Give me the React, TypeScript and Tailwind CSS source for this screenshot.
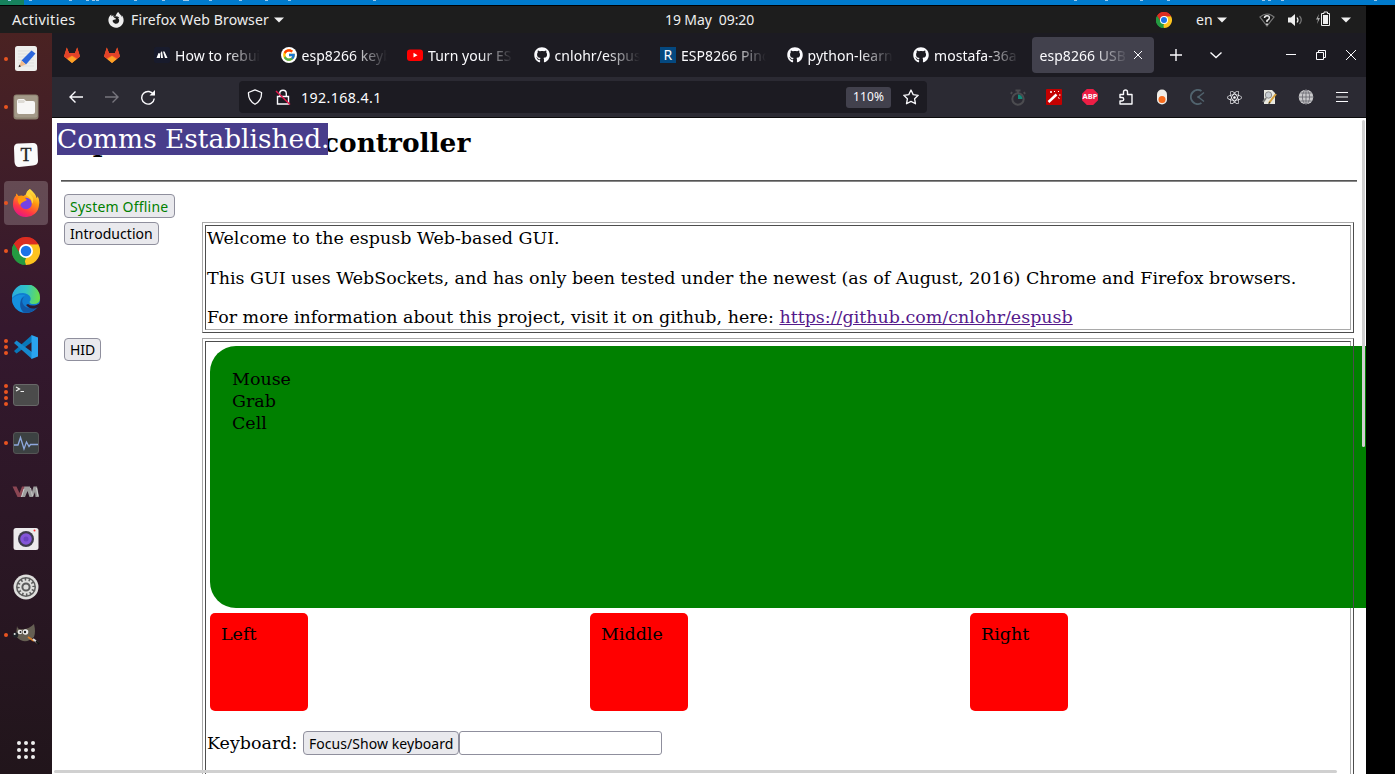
import React from "react";
import { FaGithub, FaFirefoxBrowser, FaReact } from "react-icons/fa";
import { FcGoogle } from "react-icons/fc";

const UI = "font-['Noto_Sans','Open_Sans',sans-serif]";

function Chrome({ size }: { size: number }) {
  return (
    <svg width={size} height={size} viewBox="0 0 48 48">
      <path d="M24 24 3.2 12A24 24 0 0 1 44.8 12Z" fill="#db2d21" />
      <path d="M24 24 44.8 12A24 24 0 0 1 24 48Z" fill="#fcc31e" />
      <path d="M24 24 24 48A24 24 0 0 1 3.2 12Z" fill="#249a41" />
      <path d="M24 12.5H44.8V13L34 30Z" fill="#fcc31e" />
      <path d="M33.5 29.5 24 48 20 35Z" fill="#fcc31e" />
      <path d="M3.2 12A24 24 0 0 1 44.8 12.5H24L14 18 13 27Z" fill="#db2d21" />
      <path d="M3.2 12 13.7 30 24 36 20 48A24 24 0 0 1 3.2 12Z" fill="#249a41" />
      <circle cx="24" cy="24" r="12" fill="#fff" />
      <circle cx="24" cy="24" r="9" fill="#1a73e8" />
    </svg>
  );
}

function Gitlab() {
  return (
    <svg width="18" height="18" viewBox="0 0 18 18">
      <path d="M9 17 1 10.5 3.8 1.5 6 7h6l2.2-5.5L17 10.5Z" fill="#fc6d26" />
      <path d="M1 10.5 3.8 1.5 6 7h6l2.2-5.5L17 10.500 14.500 12.500 9 9.500 3.500 12.500Z" fill="#e24329" />
      <path d="M9 17 4.5 13.3 9 10l4.500 3.300Z" fill="#fca326" />
    </svg>
  );
}

function Caret() {
  return (
    <svg width="10" height="6" viewBox="0 0 10 6">
      <path d="M0 .5h10L5 5.500Z" fill="#f0f0f0" />
    </svg>
  );
}

function TopBar() {
  return (
    <div className={`flex h-[27px] w-[1366px] items-center bg-[#1d1d1d] text-[14px] text-[#eee] ${UI}`}>
      <span className="ml-3 w-[96px] text-[14.500px] tracking-[0.300px]">Activities</span>
      <FaFirefoxBrowser size={16} />
      <span className="ml-[7px] w-[143px] whitespace-nowrap tracking-[0.130px]">Firefox Web Browser</span>
      <Caret />
      <span className="ml-[381px] w-[491px] pb-px whitespace-pre tracking-[-0.1px]">19 May  09:20</span>
      <Chrome size={16} />
      <span className="ml-6 w-[21px]">en</span>
      <Caret />
      <svg className="ml-[32px]" width="16" height="14" viewBox="0 0 16 14">
        <path d="M1 4Q8-2 15 4L8 13Z" fill="none" stroke="#777" strokeWidth="1.200" />
        <path d="M5.500 5Q5.500 2.700 8 2.700T10.300 5Q10.300 6.300 8 7.500V9M8 10.500V12" fill="none" stroke="#eee" strokeWidth="1.500" />
      </svg>
      <svg className="ml-[13px]" width="15" height="14" viewBox="0 0 15 14">
        <path d="M0 4.500H3L7 1V13L3 9.500H0Z" fill="#eee" />
        <path d="M9 4.500Q11 7 9 9.500" fill="none" stroke="#eee" strokeWidth="1.200" />
        <path d="M11.500 3Q15 7 11.500 11" fill="none" stroke="#777" strokeWidth="1.200" />
      </svg>
      <svg className="ml-[13px] mb-px" width="15" height="16" viewBox="0 0 15 16">
        <path d="M3 3 0 8.500H2L1 13 4 7H2Z" fill="#aaa" />
        <path d="M5.500 2.500H8V1h3.500v1.500H13.500V14.500H5.500Z" fill="none" stroke="#eee" />
        <path d="M7 4h5V13H7Z" fill="#eee" />
      </svg>
      <span className="ml-[10px]"><Caret /></span>
    </div>
  );
}

const gedit = (
  <svg width="24" height="28" viewBox="0 0 24 28">
    <rect x="1" y="1" width="22" height="25" rx="2.500" fill="#eeeeec" />
    <path d="M4 6h16M4 9h16M4 12h16M4 15h16M4 18h16M4 21h16" stroke="#d8d8d8" strokeWidth=".7" />
    <path d="m7.500 15.500 10-10 4 3-9.500 11Z" fill="#2b66dc" />
    <path d="m7.500 15.500 4.500 4-7 2.500Z" fill="#f1bb8b" />
    <path d="m5.500 19.500 1.500 2-2.500.8Z" fill="#333" />
  </svg>
);
const files = (
  <svg width="26" height="26" viewBox="0 0 26 26">
    <rect x=".5" y=".5" width="25" height="25" rx="3" fill="#8d8270" />
    <rect x="1.500" y="1.500" width="23" height="22" rx="2" fill="#a39988" />
    <path d="M4 7q0-2 2-2h5l2 2h7q2 0 2 2v9q0 2-2 2H6q-2 0-2-2Z" fill="#f7f6f5" />
    <path d="M5 6h6l1 1.500-1 1.500H5Z" fill="#dedbd5" />
  </svg>
);
const typora = (
  <svg width="26" height="26" viewBox="0 0 26 26">
    <path d="M1 6Q1 1 6 1.500L20 1q4.500 0 4.500 5l.5 13q0 4-5 4.500L6 25Q2 25 1.500 20Z" fill="#fafafa" />
    <text x="13" y="19" textAnchor="middle" fontFamily="Liberation Serif, serif" fontSize="18" fill="#222" stroke="#222" strokeWidth=".3">T</text>
  </svg>
);
const firefox = (
  <svg width="28" height="28" viewBox="0 0 28 28">
    <defs>
      <linearGradient id="ffBody" x1=".8" y1="0" x2=".3" y2="1">
        <stop offset="0" stopColor="#fff44f" />
        <stop offset=".4" stopColor="#ff980e" />
        <stop offset=".75" stopColor="#ff3647" />
        <stop offset="1" stopColor="#e31587" />
      </linearGradient>
    </defs>
    <path d="M18 0q6 5 6.500 9 1.200-.5 1-2Q28 11 27 16A13 12.500 0 0 1 1 15q0-6 3-8.500V4.500q1.500.5 2.500 2.500 3-1 5 0Q15 5 15 4q1-3 3-4Z" fill="url(#ffBody)" />
    <circle cx="14" cy="14.500" r="5.800" fill="#7542e5" />
    <path d="M6 9q4-2 7 0l2 2-4 2q-2 1-3 3-3-3-2-7Z" fill="#ff980e" />
    <path d="M14 6q6 3 6 9 3-5-1-9-2-2-1-6-4 2-4 6Z" fill="#ffd43c" />
  </svg>
);
const edge = (
  <svg width="28" height="28" viewBox="0 0 28 28">
    <defs>
      <linearGradient id="edgeTop" x1="0" y1=".3" x2="1" y2=".4">
        <stop offset="0" stopColor="#2aa9e0" />
        <stop offset=".5" stopColor="#31c4c5" />
        <stop offset="1" stopColor="#6bdf48" />
      </linearGradient>
    </defs>
    <circle cx="14" cy="14" r="14" fill="#0f7cd1" />
    <path d="M0 13A14 14 0 0 1 28 13q0 6-6.500 6-4 0-4-2.300 1.500-1 1-4Q17 8.500 11 8 4 8 0 13Z" fill="url(#edgeTop)" />
    <path d="M8.500 17q0-5 5-7Q8 9 4 11q-4 2-4 4a14 14 0 0 0 11 12.500Q8 24 8.500 17Z" fill="#1590df" />
    <path d="M12 12q-3 3-1 7 3 6 14 3-5 7-13 5.500Q7 23 8.500 17 9 13 12 12Z" fill="#1157a5" />
    <path d="M16 19q3 2.500 8.500 1l3-1.500-1 3-2 1.500Q18 25 14 20Z" fill="#301a30" />
  </svg>
);
const vscode = (
  <svg width="26" height="26" viewBox="0 0 26 26">
    <path d="M19 1 1 17l2.500 2.500L19 8Z" fill="#0877b9" />
    <path d="M19 25 1 9l2.500-2.500L19 18Z" fill="#1689ce" />
    <path d="M18.500 1 25 3.500v19L18.500 25Z" fill="#2aa4f0" />
  </svg>
);
const terminal = (
  <svg width="26" height="24" viewBox="0 0 26 24">
    <rect x=".5" y="1.500" width="25" height="21" rx="2.500" fill="#4b4b4b" stroke="#686868" />
    <path d="m3 4 3.500 2L3 8M7.500 8.500H11" fill="none" stroke="#eee" strokeWidth="1.200" />
  </svg>
);
const monitor = (
  <svg width="26" height="24" viewBox="0 0 26 24">
    <rect x=".5" y="1.500" width="25" height="21" rx="2.500" fill="#3c4142" stroke="#555" />
    <path d="M1 14h4l2.500-7.500L11 18l2.500-7L16 15.500l1.500-2H25" fill="none" stroke="#8fa8dd" strokeWidth="1.300" />
  </svg>
);
const vmware = (
  <svg className="mt-px" width="28" height="13" viewBox="0 0 28 13">
    <path d="M.5 1.500h4l3 6.500 2.500-6.500h3L9 12H5.500Z" fill="#8b4653" />
    <path d="M9 12 12.500 1.500H18l1.500 7 2-7H25L27 12h-3.500L23 7l-2 5h-3.500L15.500 6 13 12Z" fill="#9c9c9c" />
    <path d="m12 4-2.500 8M18.500 3l2 8M24.500 3l1.500 8" stroke="#d5d5d5" strokeWidth=".9" />
  </svg>
);
const camera = (
  <svg width="26" height="24" viewBox="0 0 26 24">
    <rect x=".5" y="1" width="25" height="22" rx="2.500" fill="#eceaec" />
    <circle cx="13" cy="12" r="8" fill="#3e3b4b" />
    <circle cx="13" cy="12" r="5.800" fill="#8455d9" />
    <circle cx="13" cy="12" r="2.500" fill="#6c43c0" />
    <circle cx="21.500" cy="3.500" r="1" fill="#f33" />
  </svg>
);
const settings = (
  <svg width="26" height="26" viewBox="0 0 26 26">
    <circle cx="13" cy="13" r="12.500" fill="#dededc" />
    <circle cx="13" cy="13" r="10" fill="#5b5b5b" />
    <circle cx="13" cy="13" r="7.200" fill="none" stroke="#dededc" strokeWidth="2.500" strokeDasharray="2.300 1.470" />
    <circle cx="13" cy="13" r="5.500" fill="none" stroke="#dededc" strokeWidth="1.800" />
    <circle cx="13" cy="13" r="2.600" fill="#dededc" />
  </svg>
);
const gimp = (
  <svg width="28" height="22" viewBox="0 0 28 22">
    <path d="M5 2q1 4 5 3 6 1 12-5 2 8 0 13-5 5-11 4-6-2-7-6Z" fill="#655f53" />
    <circle cx="3.500" cy="11" r="2.800" fill="#20242a" />
    <circle cx="2.700" cy="10" r="1" fill="#ddd" />
    <circle cx="8" cy="8" r="2.300" fill="#eee" />
    <circle cx="13.500" cy="8" r="2.800" fill="#eee" />
    <circle cx="8.500" cy="8" r="1" fill="#222" />
    <circle cx="13" cy="8" r="1.200" fill="#222" />
    <path d="m16 13 6 4" stroke="#d77e29" strokeWidth="2" />
    <path d="m21 15 5 4" stroke="#ddd" strokeWidth="2" />
    <path d="m24 17 3 3" stroke="#111" strokeWidth="2" />
  </svg>
);

const dock: { icon: React.ReactNode; dots: number; active?: boolean }[] = [
  { icon: gedit, dots: 1 },
  { icon: files, dots: 1 },
  { icon: typora, dots: 0 },
  { icon: firefox, dots: 1, active: true },
  { icon: <Chrome size={28} />, dots: 1 },
  { icon: edge, dots: 0 },
  { icon: vscode, dots: 3 },
  { icon: terminal, dots: 4 },
  { icon: monitor, dots: 1 },
  { icon: vmware, dots: 0 },
  { icon: camera, dots: 0 },
  { icon: settings, dots: 0 },
  { icon: gimp, dots: 1 },
];

function Dock() {
  return (
    <div className="flex w-[52px] shrink-0 flex-col bg-linear-to-b from-[#4a2222] via-[#34182e] via-40% to-[#21151b] pt-[2px]">
      {dock.map((d, i) => (
        <div key={i} className="flex h-12 shrink-0 items-center">
          <div className="flex w-1 shrink-0 translate-x-1 flex-col gap-[2px]">
            {Array.from({ length: d.dots }, (_, k) => (
              <span key={k} className="size-1 rounded-full bg-[#e95420]" />
            ))}
          </div>
          <div className={`flex size-11 items-center justify-center rounded-[4px] ${d.active ? "bg-white/20" : ""}`}>{d.icon}</div>
        </div>
      ))}
      <svg className="mt-[81px] ml-4 shrink-0" width="20" height="20" viewBox="0 0 20 20">
        {[3, 10, 17].map((y) => [3, 10, 17].map((x) => <circle key={`${x}-${y}`} cx={x} cy={y} r="2" fill="#eee" />))}
      </svg>
    </div>
  );
}

const tabs: { icon: React.ReactNode; title: string }[] = [
  {
    icon: (
      <svg width="16" height="16" viewBox="0 0 16 16">
        <rect width="16" height="16" rx="2" fill="#181b2c" />
        <path d="m2.500 11 2-5 1.500.5V11Zm4.500 0-.5-5L8 4l1 7Zm4 0L9 4.500h1.500L13.500 11Z" fill="#fff" />
      </svg>
    ),
    title: "How to rebuild",
  },
  {
    icon: (
      <span className="flex size-4 items-center justify-center rounded-full bg-white"><FcGoogle size={14} /></span>
    ),
    title: "esp8266 keyboard",
  },
  {
    icon: (
      <svg width="16" height="16" viewBox="0 0 16 16">
        <rect y="2.500" width="16" height="11.500" rx="3" fill="#f00" />
        <path d="m6.500 5.800 4 2.400-4 2.400Z" fill="#fff" />
      </svg>
    ),
    title: "Turn your ESP8266",
  },
  { icon: <FaGithub size={16} />, title: "cnlohr/espusb" },
  {
    icon: <span className="flex size-4 items-center justify-center bg-[#04487f] text-[14px] leading-4">R</span>,
    title: "ESP8266 Pinout",
  },
  { icon: <FaGithub size={16} />, title: "python-learning" },
  { icon: <FaGithub size={16} />, title: "mostafa-36a" },
];

const FADE = "[mask-image:linear-gradient(to_right,black_60%,transparent_100%)]";

function TabBar() {
  return (
    <div className="flex h-11 items-center bg-[#1c1b22] text-[14px] tracking-[0.050px] text-[#fbfbfe]">
      <div className="flex w-[94px] gap-[22px] pl-[11px]">
        <Gitlab />
        <Gitlab />
      </div>
      {tabs.map((t, i) => (
        <div key={i} className="flex w-[126.500px] items-center gap-[5px] pl-2">
          {t.icon}
          <span className={`w-[85px] overflow-hidden whitespace-nowrap ${FADE}`}>{t.title}</span>
        </div>
      ))}
      <div className="flex h-9 w-[122px] items-center rounded-[4px] bg-[#42414d] pl-2">
        <span className={`w-[88px] overflow-hidden whitespace-nowrap ${FADE}`}>esp8266 USB controller</span>
        <svg className="ml-[5px]" width="10" height="10" viewBox="0 0 10 10"><path d="m1 1 8 8m0-8-8 8" stroke="#fbfbfe" /></svg>
      </div>
      <svg className="ml-4" width="12" height="12" viewBox="0 0 12 12"><path d="M6 0v12M0 6h12" stroke="#fbfbfe" strokeWidth="1.400" /></svg>
      <svg className="ml-7" width="12" height="8" viewBox="0 0 12 8"><path d="m.5 1.500 5.500 5 5.500-5" fill="none" stroke="#fbfbfe" strokeWidth="1.400" /></svg>
      <svg className="ml-16" width="10" height="10" viewBox="0 0 10 10"><path d="M0 4.500h10" stroke="#fbfbfe" /></svg>
      <svg className="ml-5" width="10" height="10" viewBox="0 0 10 10"><path d="M.5 2.500h7v7h-7ZM2.500 2.500v-2h7v7h-2" fill="none" stroke="#fbfbfe" /></svg>
      <svg className="ml-5" width="10" height="10" viewBox="0 0 10 10"><path d="m0 0 10 10m0-10L0 10" stroke="#fbfbfe" /></svg>
    </div>
  );
}

const extensions: React.ReactNode[] = [
  <svg width="16" height="17" viewBox="0 0 16 17">
    <circle cx="8" cy="10" r="5.700" fill="none" stroke="#4c4c50" strokeWidth="2" />
    <path d="M8 10V5.500A4.500 4.500 0 0 1 12.500 10Z" fill="#128a78" />
    <path d="M5.500 1.500h5M8 1v3M2 3 1 5M14 3l1 2" stroke="#4c4c50" strokeWidth="1.800" />
  </svg>,
  <svg width="16" height="16" viewBox="0 0 16 16">
    <rect width="16" height="16" rx="1" fill="#c40000" />
    <path d="m2.500 13 8-7.500" stroke="#fff" strokeWidth="2.500" />
    <path d="M4 3h2M5 2v2M8 2.500h1M12 3l1-1M13 6h1.500M12 8.500l1.500 1" stroke="#fff" />
  </svg>,
  <span className="flex size-4 items-center justify-center bg-[#ed1e45] text-[7.500px] font-bold [clip-path:polygon(30%_0,70%_0,100%_30%,100%_70%,70%_100%,30%_100%,0_70%,0_30%)]">ABP</span>,
  <svg width="14" height="16" viewBox="0 0 14 16">
    <path d="M1 5.500h3.500V3a2 2 0 0 1 4 0v2.500H13V15H1v-3h2a1.700 1.700 0 0 0 0-3.500H1Z" fill="none" stroke="#fbfbfe" strokeWidth="1.400" strokeLinejoin="round" />
  </svg>,
  <svg width="12" height="16" viewBox="0 0 12 16">
    <rect x="1" y=".5" width="10" height="15" rx="5" fill="#efede8" />
    <circle cx="6" cy="10.500" r="3.500" fill="#f76b1c" />
  </svg>,
  <svg width="16" height="16" viewBox="0 0 16 16">
    <path d="M11.500 2A7 7 0 1 0 11.500 14" fill="none" stroke="#51636e" strokeWidth="2" />
    <path d="M14 3.500 9 7.500M9 8.500l5 4" stroke="#51636e" strokeWidth="1.500" />
    <circle cx="8.500" cy="8" r="1.300" fill="#51636e" />
  </svg>,
  <FaReact size={15} />,
  <svg width="16" height="16" viewBox="0 0 16 16">
    <path d="M2 1h8l3 3v11H2Z" fill="#e8e8e0" />
    <circle cx="6.500" cy="6" r="3.200" fill="#c8cdd2" stroke="#888" />
    <path d="m4 9-3 4" stroke="#777" strokeWidth="2" />
    <path d="M14 5 7 14" stroke="#d6a13b" strokeWidth="2" />
    <path d="m7.500 12.500-1.500 3 2.500-1.500Z" fill="#333" />
  </svg>,
  <svg width="16" height="16" viewBox="0 0 16 16">
    <circle cx="8" cy="8" r="7.300" fill="#c9c9cb" />
    <path d="M8 1v14M1 8h14M2.500 4h11M2.500 12h11" stroke="#66656d" strokeWidth=".8" />
    <ellipse cx="8" cy="8" rx="3.600" ry="7" fill="none" stroke="#66656d" strokeWidth=".8" />
  </svg>,
  <svg width="12" height="12" viewBox="0 0 12 12"><path d="M0 1.500h12M0 6h12M0 10.500h12" stroke="#fbfbfe" strokeWidth="1.200" /></svg>,
];

function Toolbar() {
  return (
    <div className="flex h-10 items-center bg-[#2b2a33] text-[#fbfbfe]">
      <svg className="ml-[17px]" width="14" height="12" viewBox="0 0 14 12"><path d="M14 6H1M6.500 .5 1 6l5.500 5.500" fill="none" stroke="#fbfbfe" strokeWidth="1.400" /></svg>
      <svg className="ml-[22px]" width="14" height="12" viewBox="0 0 14 12"><path d="M0 6h13M7.500 .5 13 6l-5.500 5.500" fill="none" stroke="#77767e" strokeWidth="1.400" /></svg>
      <svg className="ml-[21px]" width="16" height="16" viewBox="0 0 16 16">
        <path d="M13.700 6A6.300 6.300 0 1 0 14.300 9.500" fill="none" stroke="#fbfbfe" strokeWidth="1.400" />
        <path d="M15 1v5.500H9.500Z" fill="#fbfbfe" />
      </svg>
      <div className="ml-[83px] flex h-8 w-[688px] shrink-0 items-center rounded-[4px] bg-[#1c1b22]">
        <svg className="ml-2" width="16" height="16" viewBox="0 0 16 16">
          <path d="M8 .8 14.500 3.500Q15 11.500 8 15.300 1 11.500 1.500 3.500Z" fill="none" stroke="#fbfbfe" strokeWidth="1.300" strokeLinejoin="round" />
        </svg>
        <svg className="ml-3" width="16" height="16" viewBox="0 0 16 16">
          <path d="M4.700 7.500V4.500a3.300 3.300 0 0 1 6.600 0v3M2.500 7.500h11V15h-11Z" fill="none" stroke="#fbfbfe" strokeWidth="1.400" />
          <path d="m1 2 14 13.500" stroke="#e3194c" strokeWidth="1.500" />
        </svg>
        <span className="ml-[10px] w-[545px] pt-[2px] text-[14.200px] tracking-[0.400px]">192.168.4.1</span>
        <span className="flex h-[21px] w-[45px] items-center justify-center rounded-[3px] bg-[#42414d] text-[12px] tracking-[0.100px]">110%</span>
        <svg className="ml-3" width="16" height="16" viewBox="0 0 16 16">
          <path d="m8 1 2.200 4.600 5 .7-3.600 3.500.9 5L8 12.400l-4.500 2.400.9-5L.8 6.300l5-.7Z" fill="none" stroke="#fbfbfe" strokeWidth="1.300" strokeLinejoin="round" />
        </svg>
      </div>
      <div className="ml-[73px] flex">
        {extensions.map((e, i) => (
          <div key={i} className="flex w-9 shrink-0 items-center justify-center">{e}</div>
        ))}
      </div>
    </div>
  );
}

const BTN = "shrink-0 whitespace-nowrap rounded-[4px] border border-[#8f8f9d] bg-[#e9e9ed] px-[5px] text-left text-[14px] font-['Noto_Sans','Open_Sans',sans-serif]";
const OUTER = "w-[1152px] shrink-0 border border-t-[#a9a9a9] border-l-[#a9a9a9] border-r-[#4d4d4d] border-b-[#4d4d4d] p-[2px]";
const INNER = "border border-t-[#4d4d4d] border-l-[#4d4d4d] border-r-[#a9a9a9] border-b-[#a9a9a9] px-px";

function Page() {
  return (
    <div className="relative h-[656px] w-[1314px] overflow-hidden bg-white font-['DejaVu_Serif',serif] text-[17.472px] leading-[22px] text-black">
      <h1 className="flex pt-[9px] pl-[9px] text-[26.400px] leading-[32px] font-bold">
        <span className="w-[262px] shrink-0 whitespace-nowrap">esp8266 USB</span>
        <span>controller</span>
      </h1>
      <div className="mt-[21px] ml-[9px] h-[2px] w-[1296px] border-t border-t-[#555] bg-[#888]" />
      <div className="mt-3 ml-3">
        <button className={`${BTN} block h-6 w-[111px] pt-px leading-[22px] tracking-[0.200px] text-[green]`}>System Offline</button>
      </div>
      <div className="mt-1 ml-3 flex items-start">
        <div className="w-[138px] shrink-0"><button className={`${BTN} block h-[23px] w-[95px] leading-[20px] tracking-[0.050px]`}>Introduction</button></div>
        <div className={OUTER}>
          <div className={`${INNER} h-[105px]`}>
            <p className="pt-[1px]">Welcome to the espusb Web-based GUI.</p>
            <p className="pt-[18px]">This GUI uses WebSockets, and has only been tested under the newest (as of August, 2016) Chrome and Firefox browsers.</p>
            <p className="pt-[17px]">For more information about this project, visit it on github, here: <a className="text-[#551a8b] underline">https://github.com/cnlohr/espusb</a></p>
          </div>
        </div>
      </div>
      <div className="mt-[5px] ml-3 flex items-start">
        <div className="w-[138px] shrink-0"><button className={`${BTN} block h-[23px] w-[37px] leading-[20px]`}>HID</button></div>
        <div className={`${OUTER} relative`}>
          <div className={`${INNER} h-[520px]`}>
            <div className="mt-1 ml-[3px] h-[262px] w-[1182px] rounded-[26px] bg-[green] pt-[22px] pl-[22px]">
              <p>Mouse</p>
              <p>Grab</p>
              <p>Cell</p>
            </div>
            <div className="mt-[5px] ml-[3px] flex gap-[282px]">
              {["Left", "Middle", "Right"].map((b) => (
                <div key={b} className="size-[98px] rounded-[5px] bg-[red] pt-[10px] pl-[11px]">{b}</div>
              ))}
            </div>
            <div className="mt-5 flex items-center">
              <span className="w-[96px] pb-px">Keyboard:</span>
              <button className={`${BTN} h-6 w-[156px] pt-px leading-[22px] tracking-[0.050px]`}>Focus/Show keyboard</button>
              <input className="h-6 w-[203px] rounded-[3px] border border-[#8f8f9d] bg-white" />
            </div>
          </div>
          <div className="absolute top-0 -right-px h-full w-px bg-[#4d4d4d]" />
        </div>
      </div>
      <div className="absolute top-[5px] left-[5px] h-8 w-[271px] bg-[#483d8b] text-[26.400px] leading-[32px] whitespace-nowrap text-white">Comms Established.</div>
      <div className="absolute top-[2px] right-px h-[327px] w-[3px] rounded-sm bg-[#d0d0d0]" />
      <div className="absolute bottom-px left-[2px] h-[3px] w-[1283px] rounded-sm bg-[#d0d0d0]" />
    </div>
  );
}

const marks = [8, 29, 69, 86, 92, 96, 134, 162, 183, 186, 209, 239, 265, 288, 373, 1074, 1105, 1140, 1167, 1262, 1268, 1281, 1374];

export default function App() {
  return (
    <div className="h-[774px] w-[1395px] overflow-hidden bg-black">
      <svg className="block" width="1395" height="6" viewBox="0 0 1395 6">
        <rect width="1395" height="5" fill="#007acc" />
        <rect width="24" height="5" fill="#16825d" />
        {marks.map((x) => <rect key={x} x={x} width="3" height="1" fill="#9ccbed" />)}
      </svg>
      <TopBar />
      <div className="flex h-[741px] w-[1366px]">
        <Dock />
        <div className={`w-[1314px] ${UI}`}>
          <TabBar />
          <Toolbar />
          <div className="h-px bg-[#0c0c0d]" />
          <Page />
        </div>
      </div>
    </div>
  );
}
